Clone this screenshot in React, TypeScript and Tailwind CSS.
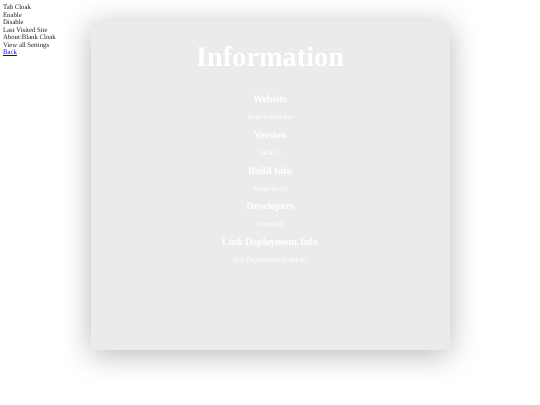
const rows = [
  ['Website', 'Doge Unblocker'],
  ['Version', 'V4.4.13'],
  ['Build Info', 'Stable Build'],
  ['Developers', 'Fowntain'],
  ['Link Deployment Info', 'Self Deployment (GitHub)'],
];

export default function App() {
  return (
    <div className="relative h-[405px] w-[540px] overflow-hidden bg-white font-['Liberation_Serif',serif] text-[6.75px] leading-[7.55px] text-black blur-[0.2px] [text-rendering:geometricPrecision]">
      {/* sidebar links */}
      <div className="absolute left-[3px] top-[4px] text-[#222222]">
        <div>Tab Cloak</div>
        <div>Enable</div>
        <div>Disable</div>
        <div>Last Visited Site</div>
        <div>About:Blank Cloak</div>
        <div>View all Settings</div>
        <a href="#" className="text-[#0000ee] underline">Back</a>
      </div>
      <div className="mx-auto mt-[21px] h-[329px] w-[359px] rounded-[3px] bg-[#ebebeb] pt-[22px] text-center text-white shadow-[0_5px_30px_rgba(0,0,0,0.28)]">
        <h1 className="text-[28.3px] font-bold leading-[30px]">Information</h1>
        <div className="mt-[20px] flex flex-col gap-[6.75px]">
          {rows.map(([title, value]) => (
            <div key={title}>
              <h2 className="text-[10.1px] font-bold leading-[13px]">{title}</h2>
              <p className="mt-[7px] text-[6.9px] leading-[9px]">{value}</p>
            </div>
          ))}
        </div>
      </div>
    </div>
  );
}
